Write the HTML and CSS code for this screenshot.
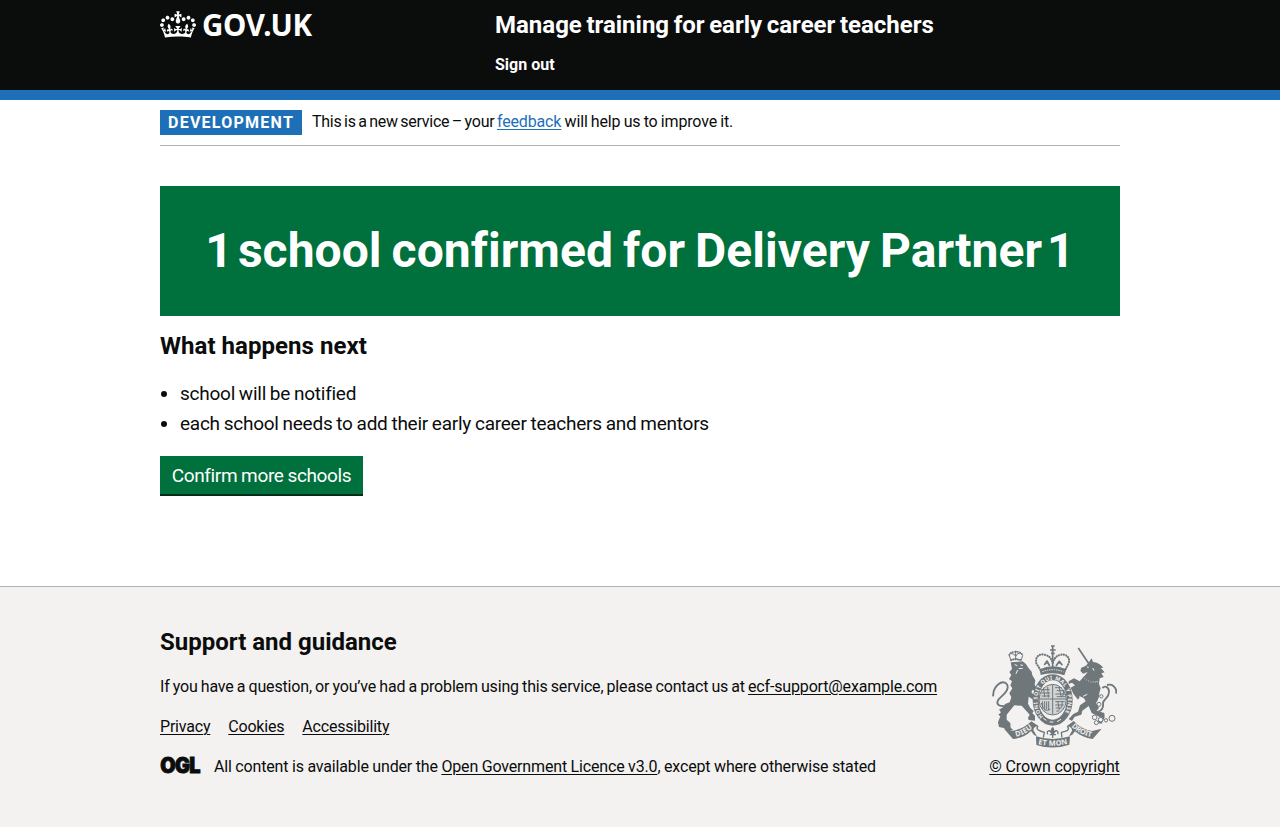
FILE: index.html
```html
<!DOCTYPE html>
<html lang="en">
<head>
<meta charset="utf-8">
<title>Manage training for early career teachers</title>
<link rel="stylesheet" href="styles.css">
</head>
<body>
<header class="header">
  <div class="container header-row">
    <a class="logo" href="#">
      <svg class="crown" viewBox="0 0 132 97" width="36" height="27" aria-hidden="true"><path fill="currentColor" d="M25 30.2c3.5 1.5 7.7-.2 9.1-3.7 1.5-3.6-.2-7.8-3.9-9.2-3.6-1.4-7.6.3-9.1 3.9-1.4 3.5.3 7.5 3.9 9zM9 39.5c3.6 1.5 7.8-.2 9.2-3.7 1.5-3.6-.2-7.8-3.9-9.1-3.6-1.5-7.6.2-9.1 3.8-1.4 3.5.3 7.5 3.8 9zM4.4 57.2c3.5 1.5 7.7-.2 9.1-3.8 1.5-3.6-.2-7.7-3.9-9.1-3.5-1.5-7.6.3-9.1 3.8-1.4 3.5.3 7.6 3.9 9.1zm38.3-21.4c3.5 1.5 7.7-.2 9.1-3.8 1.5-3.6-.2-7.7-3.9-9.1-3.6-1.5-7.6.3-9.1 3.8-1.3 3.6.4 7.7 3.9 9.1zm64.4-5.6c-3.6 1.5-7.8-.2-9.1-3.7-1.5-3.6.2-7.8 3.8-9.2 3.6-1.4 7.7.3 9.2 3.9 1.3 3.5-.4 7.5-3.9 9zm15.9 9.3c-3.6 1.5-7.7-.2-9.1-3.7-1.5-3.6.2-7.8 3.7-9.1 3.6-1.5 7.7.2 9.2 3.8 1.5 3.5-.3 7.5-3.8 9zm4.7 17.7c-3.6 1.5-7.8-.2-9.2-3.8-1.5-3.6.2-7.7 3.9-9.1 3.6-1.5 7.7.3 9.2 3.8 1.3 3.5-.4 7.6-3.9 9.1zM89.3 35.8c-3.6 1.5-7.8-.2-9.2-3.8-1.4-3.6.2-7.7 3.9-9.1 3.6-1.5 7.7.3 9.2 3.8 1.4 3.6-.3 7.7-3.9 9.1zM69.7 17.7l8.9 4.7V9.3l-8.9 2.8c-.2-.3-.5-.6-.9-.9L72.4 0H59.6l3.5 11.2c-.3.3-.6.5-.9.9l-8.8-2.8v13.1l8.8-4.7c.3.3.6.7.9.9l-5 15.4v.1c-.2.8-.4 1.6-.4 2.4 0 4.1 3.1 7.5 7 8.1h.2c.3 0 .7.1 1 .1.4 0 .7 0 1-.1h.2c4-.6 7.1-4.1 7.1-8.1 0-.8-.1-1.7-.4-2.4V34l-5.1-15.4c.4-.2.7-.6 1-.9zM66 92.8c16.9 0 32.8 1.1 47.1 3.2 4-16.9 8.9-26.7 14-33.5l-9.6-3.4c1 4.9 1.1 7.2 0 10.2-1.5-1.4-3-4.3-4.2-8.7L108.6 76c2.8-2 5-3.2 7.5-3.3-4.4 9.4-10 11.9-13.6 11.2-4.3-.8-6.3-4.6-5.6-7.9 1-4.7 5.7-5.9 8-.5 4.3-8.7-3-11.4-7.6-8.8 7.1-7.2 7.9-13.5 2.1-21.1-8 6.1-8.1 12.3-4.5 20.8-4.7-5.4-12.1-2.5-9.5 6.2 3.4-5.2 7.9-2 7.2 3.1-.6 4.3-6.4 7.8-13.5 7.2-10.3-.9-10.9-8-11.2-13.8 2.5-.5 7.1 1.8 11 7.3L80.2 60c-4.1 4.4-8 5.3-12.3 5.4 1.4-4.4 8-11.6 8-11.6H55.5s6.4 7.2 7.9 11.6c-4.2-.1-8-1-12.3-5.4l1.4 16.4c3.9-5.5 8.5-7.7 10.9-7.3-.3 5.8-.9 12.8-11.1 13.8-7.2.6-12.9-2.9-13.5-7.2-.7-5 3.8-8.3 7.1-3.1 2.7-8.7-4.6-11.6-9.4-6.2 3.7-8.5 3.6-14.7-4.6-20.8-5.8 7.6-5 13.9 2.2 21.1-4.7-2.6-11.9.1-7.7 8.8 2.3-5.5 7.1-4.2 8.1.5.7 3.3-1.3 7.1-5.7 7.9-3.5.7-9-1.8-13.5-11.2 2.5.1 4.7 1.3 7.5 3.3l-4.7-15.4c-1.2 4.4-2.7 7.2-4.3 8.7-1.1-3-.9-5.3 0-10.2l-9.5 3.4c5 6.9 9.9 16.7 14 33.5 14.8-2.1 30.8-3.2 47.7-3.2z"/></svg>
      <span class="logo-text">GOV.UK</span>
    </a>
    <div class="header-content">
      <a class="service-name" href="#">Manage training for early career teachers</a>
      <nav><a class="signout" href="#">Sign out</a></nav>
    </div>
  </div>
</header>
<div class="container">
  <div class="phase">
    <strong class="tag">DEVELOPMENT</strong>
    <span class="phase-text"><span class="phase-intro">This is a new service – your </span><a class="bluelink" href="#">feedback</a> will help us to improve it.</span>
  </div>
  <main class="main">
    <div class="panel"><h1 class="panel-title"><span>1</span> <span>school confirmed for Delivery Partner</span> <span>1</span></h1></div>
    <h2 class="heading next">What happens next</h2>
    <ul class="list">
      <li>school will be notified</li>
      <li>each school needs to add their early career teachers and mentors</li>
    </ul>
    <a class="button" href="#">Confirm more schools</a>
  </main>
</div>
<footer class="footer">
  <div class="container footer-row">
    <div class="footer-main">
      <h2 class="heading support">Support and guidance</h2>
      <p class="contact">If you have a question, or you’ve had a problem using this service, please contact us at <a href="#">ecf-support@example.com</a></p>
      <ul class="links"><li><a href="#">Privacy</a></li><li><a href="#">Cookies</a></li><li><a href="#">Accessibility</a></li></ul>
      <div class="licence">
        <svg class="ogl" width="41" height="17" viewBox="0 0 41 17"><text class="ogl-text" x="0.3" y="15.9" textLength="39.4" lengthAdjust="spacingAndGlyphs">OGL</text></svg>
        <span>All content is available under the <a href="#">Open Government Licence v3.0</a>, except where otherwise stated</span>
      </div>
    </div>
    <a class="copyright" href="#">
      <svg class="crest" viewBox="33 27 378 312" width="126" height="104" aria-hidden="true">
        <defs>
          <path id="motto" d="M190 245A46 62 0 1 1 246 245"/>
          <path id="ribbon-left" d="M108 305Q136 300 162 275"/>
          <path id="ribbon-mid" d="M174 327Q218 338 266 326"/>
          <path id="ribbon-right" d="M274 274Q296 299 338 307"/>
        </defs>
        <!-- lion -->
        <path class="ink" d="M92 82L128 79Q141 87 146 100L155 110L157 121L166 136L164 149Q174 160 173 175L158 164L154 172L171 190L164 197L146 185L144 206L151 219L161 228L157 235L165 242L165 257L146 255L144 248L149 239L139 228L125 212L103 211L80 239L80 254L91 264L92 278L99 284L83 287L71 279L57 276L54 262L61 244L55 239L63 232L57 224L69 217L75 207L89 202L94 187L88 175L97 160L91 151L96 139L87 132L94 120L88 111L96 102Z"/>
        <path class="line tail" d="M79 213C56 216 48 207 54 196C61 184 81 176 83 158C84 142 68 137 56 147C47 154 42 162 40 174M41 168L39 184"/>
        <path class="paper-line" d="M104 89L112 92M121 90L129 91M116 101L128 100M113 105L108 116"/>
        <path class="line thin" d="M92 74L87 59Q90 53 101 57L107 64L113 56Q124 52 128 61L124 75Q108 68 92 74ZM107 47V72M103 50H112"/>
        <path class="beads" d="M88 60Q91 50 106 51Q124 49 128 62M93 76Q108 70 125 77"/>
        <!-- unicorn -->
        <path class="line horn" d="M295 39L325 84"/>
        <path class="ink" d="M326 82L335 70L339 81Q358 83 370 98L362 99L374 112L364 115L371 126L359 130L357 147L362 160L358 174Q358 191 348 204L357 219L350 227L373 234L374 247L365 266L352 264L361 247L335 234L326 213L307 227L304 239L284 245L276 258L266 252L280 237L294 230L300 211L317 199L312 190L290 179L280 161L292 174L299 186L294 194L280 176L272 158L285 151L276 143L266 147L266 139L282 130L299 139L314 122L323 111L309 116L301 107L304 98L318 92Z"/>
        <path class="line tail" d="M355 230C366 226 371 216 369 203C372 192 389 187 387 169C385 153 374 152 367 159M381 150C394 146 403 152 408 164L409 176"/>
        <path class="paper-line" d="M321 96L326 97M338 99L342 107M310 127Q330 146 354 141M309 184L322 178"/>
        <path class="beads" d="M311 128Q330 143 355 144"/>
        <g class="chain"><circle cx="364" cy="184" r="5"/><circle cx="357" cy="208" r="6"/><circle cx="344" cy="247" r="7"/><circle cx="349" cy="263" r="6"/><circle cx="362" cy="254" r="7"/><circle cx="378" cy="256" r="5"/><circle cx="396" cy="250" r="9"/></g>
        <!-- imperial crown -->
        <path class="beads crown-beads" d="M181 104L169 85C164 65 179 54 196 60Q214 64 218 85Q224 63 240 60C258 54 272 69 266 85L256 104"/>
        <path class="line crown-line" d="M218 34V103M210 45H227M213 33H224M213 55H224M193 90L201 78L209 93M228 93L238 79L247 91M196 84H206M233 84H243"/>
        <path class="ink" d="M179 103Q218 85 259 103L253 121Q218 109 182 120Z"/>
        <path class="beads-paper" d="M187 110Q218 98 250 110"/>
        <!-- garter and shield -->
        <ellipse class="garter" cx="218" cy="195" rx="51" ry="68"/>
        <text class="motto"><textPath href="#motto" textLength="262">HONI SOIT QUI MAL Y PENSE</textPath></text>
        <ellipse class="shield" cx="218" cy="194" rx="41" ry="46"/>
        <path class="line shield-line" d="M218 150V238M176 192H260M183 164H209M181 174H211M185 183H210M190 158L195 187M203 155L205 188M225 158H245M230 167H253M226 177H256M230 185H255M237 156L244 187M252 166L248 184M188 199V221M194 199V226M200 199V223M206 199V226M184 204Q193 236 211 222M226 200H254M226 210H251M227 219H245M229 228H238M233 198L238 225M247 198L245 218"/>
        <path class="paper-line" d="M190 250L199 256M209 261H220M231 260L243 253"/>
        <!-- ribbon -->
        <path class="ink" d="M72 281L99 287Q132 281 154 259L175 273Q158 276 161 287L171 304L162 300L153 288Q134 308 99 312Z"/>
        <path class="ink" d="M365 281L336 288Q304 283 281 258L261 273Q277 276 276 287L267 304L277 299L285 289Q306 308 338 312Z"/>
        <path class="ink" d="M168 304Q217 320 270 304L268 329Q218 346 169 330Z"/>
        <path class="line" d="M174 273Q166 284 181 288L193 292L190 308M262 273Q271 286 255 289L244 292L246 308"/>
        <path class="line" d="M218 279V309M209 299H228M218 278Q211 286 217 296Q224 286 218 278M216 297C211 282 198 286 203 298M220 297C225 282 238 286 233 298"/>
        <text class="ribbon-text"><textPath href="#ribbon-left" textLength="57">DIEU</textPath></text>
        <text class="ribbon-text"><textPath href="#ribbon-mid" textLength="90">ET MON</textPath></text>
        <text class="ribbon-text"><textPath href="#ribbon-right" textLength="69">DROIT</textPath></text>
      </svg>
      <span>© Crown copyright</span>
    </a>
  </div>
</footer>
</body>
</html>
```
FILE: styles.css
```css
* { box-sizing: border-box; }
body { margin: 0; background: #fff; color: #0b0c0c; font-family: Roboto, Arial, sans-serif; font-size: 16px; line-height: 20px; }
h1, h2, p, ul { margin: 0; }
a { color: inherit; text-underline-offset: 2px; text-decoration-thickness: 1px; }
.container { width: 960px; margin: 0 auto; }
.header { height: 100px; background: #0b0c0c; color: #fff; border-bottom: 10px solid #1d70b8; }
.header-row { display: flex; padding-top: 10px; }
.header a { text-decoration: none; }
.logo { width: 335px; height: 30px; display: flex; gap: 6px; }
.crown { margin-top: 1px; }
.logo-text { font: 700 29.5px/30px "Noto Sans", sans-serif; letter-spacing: -.3px; }
.header-content { display: flex; flex-direction: column; gap: 15px; }
.service-name { font-size: 24px; font-weight: 700; line-height: 30px; word-spacing: -1.4px; }
.signout { font-weight: 700; }
.phase { display: flex; align-items: center; gap: 10px; padding: 10px 0; border-bottom: 1px solid #b1b4b6; }
.phase-text { letter-spacing: -.15px; word-spacing: -.6px; line-height: 20px; margin-top: -1px; }
.phase-intro { letter-spacing: -.25px; word-spacing: -1.2px; }
.tag { background: #1d70b8; color: #fff; padding: 0 8px; height: 25px; line-height: 25px; letter-spacing: 1.25px; width: 142px; white-space: nowrap; }
.bluelink { color: #1d70b8; }
.main { padding-top: 40px; height: 440px; }
.panel { height: 130px; background: #00703c; color: #fff; display: flex; align-items: center; justify-content: center; }
.panel-title { display: flex; gap: 5px; font-size: 48px; line-height: 50px; white-space: nowrap; letter-spacing: .05px; word-spacing: -2px; }
.heading { font-size: 24px; line-height: 30px; font-weight: 700; letter-spacing: .05px; }
.next { margin: 15px 0 20px; }
.list { padding-left: 20px; font-size: 19px; line-height: 25px; margin-bottom: 20px; letter-spacing: -.25px; word-spacing: -.6px; }
.list li { margin-bottom: 5px; }
.button { display: inline-flex; align-items: center; justify-content: center; width: 203px; height: 38px; padding-top: 2px; background: #00703c; color: #fff; box-shadow: 0 2px 0 #002d18; font-size: 19px; text-decoration: none; white-space: nowrap; letter-spacing: -.35px; word-spacing: -.5px; }
.footer { height: 241px; background: #f3f2f1; border-top: 1px solid #b1b4b6; padding-top: 40px; }
.footer-row { display: flex; justify-content: space-between; }
.footer-main { white-space: nowrap; letter-spacing: -.16px; }
.support { margin-bottom: 20px; letter-spacing: 0; }
.contact { word-spacing: -.68px; }
.links { display: flex; gap: 18px; list-style: none; padding: 0; margin: 20px 0; letter-spacing: -.2px; }
.licence { display: flex; gap: 13px; word-spacing: -.2px; }
.ogl { overflow: visible; }
.ogl-text { font: 900 21px Inter, sans-serif; fill: #0b0c0c; stroke: #0b0c0c; stroke-width: .9; letter-spacing: -.8px; }
.copyright { width: 131px; padding-top: 17px; white-space: nowrap; display: flex; flex-direction: column; align-items: center; gap: 9px; letter-spacing: -.12px; }
.crest { margin-right: 1px; }
.ink { fill: #6f777b; }
.line { fill: none; stroke: #6f777b; stroke-width: 4; stroke-linejoin: round; }
.thin { stroke-width: 3; }
.horn { stroke-width: 5; }
.tail { stroke-width: 5.5; }
.crown-line { stroke-width: 5; }
.beads { fill: none; stroke: #6f777b; stroke-width: 5; stroke-linecap: round; stroke-dasharray: 1 6; }
.crown-beads { stroke-width: 6.5; stroke-dasharray: .5 7; }
.beads-paper { fill: none; stroke: #f3f2f1; stroke-width: 3; stroke-dasharray: 4 3; }
.paper-line { fill: none; stroke: #f3f2f1; stroke-width: 3; }
.chain { fill: #f3f2f1; stroke: #6f777b; stroke-width: 3; }
.garter { fill: #f3f2f1; stroke: #6f777b; stroke-width: 18; }
.shield { fill: #d3d5d5; stroke: #6f777b; stroke-width: 3; }
.shield-line { stroke-width: 3; }
.motto { font: 700 16px "Noto Sans", sans-serif; fill: #f3f2f1; }
.ribbon-text { font: 700 22px "Noto Sans", sans-serif; fill: #f3f2f1; }
```
